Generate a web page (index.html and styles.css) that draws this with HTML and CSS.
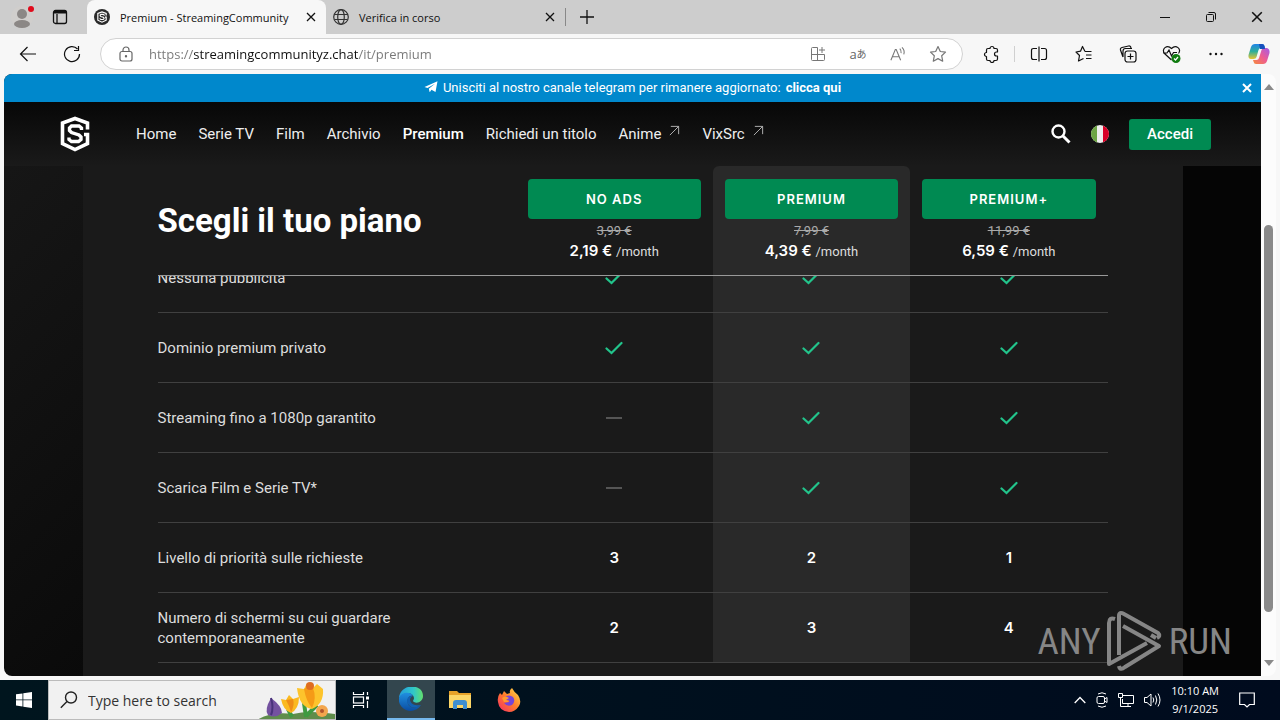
FILE: index.html
```html
<!DOCTYPE html>
<html lang="it">

<head>
    <meta charset="UTF-8">
    <meta name="viewport" content="width=device-width, initial-scale=1.0">
    <title>Premium - StreamingCommunity</title>
    <link rel="stylesheet" href="styles.css">
</head>

<body>
    <svg class="defs" aria-hidden="true">
        <symbol id="check" viewBox="0 0 18 14">
            <path d="M1.5 7.5 6.5 12 16.500 2" fill="none" stroke="#22c48b" stroke-width="2.200" stroke-linecap="round" />
        </symbol>
        <symbol id="close" viewBox="0 0 10 10">
            <path d="M1 1 9 9M9 1 1 9" fill="none" stroke="currentColor" stroke-width="1.300" />
        </symbol>
        <symbol id="external" viewBox="0 0 12 12">
            <path d="M2 1.500H10.500V10M10.500 1.500 1 11" fill="none" stroke="currentColor" />
        </symbol>
        <symbol id="logo" viewBox="0 0 32 36">
            <path d="M28.500 13.500V7L16 2.500 3.500 7V27.500L16 33.500 28.500 27.500V18.500H25" fill="none" stroke="currentColor" stroke-width="3.600" />
            <path d="M22.500 14V12L20 10H12.500L10.500 12V14.500L12.500 16.500 20 19 22 21V23.500L19.500 25.500H12.500L10 23.500V21.500" fill="none" stroke="currentColor" stroke-width="3.400" />
        </symbol>
    </svg>

    <!-- Tabs -->
    <div class="tab-strip">
        <button class="icon-button profile" aria-label="Profile">
            <svg width="24" height="24" viewBox="0 0 24 24">
                <circle cx="12" cy="12" r="11" fill="#d0cecc" />
                <circle cx="12" cy="9" r="5" fill="#8b8785" />
                <ellipse cx="12" cy="19" rx="8" ry="4" fill="#8b8785" />
                <circle cx="21" cy="4" r="3" fill="#e00b1c" />
            </svg>
        </button>
        <button class="icon-button workspaces" aria-label="Tab actions">
            <svg width="16" height="16" viewBox="0 0 16 16" fill="none" stroke="#111" stroke-width="1.300">
                <rect x="1.500" y="1.500" width="13" height="13" rx="2" />
                <path d="M2 3H14" stroke-width="3" />
                <path d="M5 5V14" />
            </svg>
        </button>
        <div class="tab active">
            <svg width="16" height="16" viewBox="0 0 16 16">
                <circle cx="8" cy="8" r="8" fill="#2b2b2b" />
                <g color="#fff"><use href="#logo" x="2" y="2" width="12" height="12" /></g>
            </svg>
            <span class="tab-title">Premium - StreamingCommunity</span>
            <button class="icon-button" aria-label="Close tab"><svg width="10" height="10"><use href="#close" /></svg></button>
        </div>
        <div class="tab">
            <svg width="16" height="16" viewBox="0 0 16 16" fill="none" stroke="#333" stroke-width="1.200">
                <circle cx="8" cy="8" r="7.300" />
                <ellipse cx="8" cy="8" rx="3.300" ry="7.300" />
                <path d="M1.500 5.500H14.500M1.500 10.500H14.500" />
            </svg>
            <span class="tab-title">Verifica in corso</span>
            <button class="icon-button" aria-label="Close tab"><svg width="10" height="10"><use href="#close" /></svg></button>
        </div>
        <button class="icon-button new-tab" aria-label="New tab">
            <svg width="14" height="14" viewBox="0 0 14 14" stroke="#111" stroke-width="1.300"><path d="M7 0V14M0 7H14" /></svg>
        </button>
        <div class="window-buttons">
            <button class="icon-button" aria-label="Minimize"><svg width="10" height="10" viewBox="0 0 10 10" stroke="#111"><path d="M0 5.500H10" /></svg></button>
            <button class="icon-button" aria-label="Restore">
                <svg width="10" height="10" viewBox="0 0 10 10" fill="none" stroke="#111"><rect x=".5" y="2.500" width="7" height="7" rx="1" /><path d="M2.500.5H8Q9.500.5 9.500 2V7.500" /></svg>
            </button>
            <button class="icon-button" aria-label="Close"><svg width="12" height="12"><use href="#close" /></svg></button>
        </div>
    </div>

    <!-- Toolbar -->
    <div class="toolbar">
        <button class="icon-button" aria-label="Back">
            <svg width="18" height="16" viewBox="0 0 18 16" fill="none" stroke="#111" stroke-width="1.200"><path d="M17 8H1.500M8.500 1 1.500 8 8.500 15" /></svg>
        </button>
        <button class="icon-button" aria-label="Refresh">
            <svg width="18" height="18" viewBox="0 0 18 18" fill="none" stroke="#111" stroke-width="1.200"><path d="M16.500 9A7.500 7.500 0 1 1 14.500 4M15.500 1V5.500H11" /></svg>
        </button>
        <div class="address-bar">
            <svg width="14" height="16" viewBox="0 0 14 16" fill="none" stroke="#666" stroke-width="1.200">
                <rect x="1" y="5.500" width="12" height="9.500" rx="2" />
                <path d="M4 5.500V4A3 3 0 0 1 10 4V5.500" />
                <circle cx="7" cy="10.300" r=".6" fill="#666" />
            </svg>
            <input class="address" type="text" aria-label="Address" value="https://streamingcommunityz.chat/it/premium">
            <button class="icon-button" aria-label="Install app">
                <svg width="16" height="16" viewBox="0 0 16 16" fill="none" stroke="#777"><path d="M7.500 1.500H2.500Q1.500 1.500 1.500 2.500V13.500Q1.500 14.500 2.500 14.500H13.500Q14.500 14.500 14.500 13.500V8.500H1.500M7.500 1.500V14.500M12 1V7M9 4H15" /></svg>
            </button>
            <button class="icon-button translate" aria-label="Translate">a<small>あ</small></button>
            <button class="icon-button read-aloud" aria-label="Read aloud">
                <svg width="16" height="16" viewBox="0 0 18 16" fill="none" stroke="#777" stroke-width="1.200"><path d="M1 15 6 3H7L12 15M3 11H10M11 2Q13 4 12.500 7M13.500.5Q17 4 15.500 8.500" /></svg>
            </button>
            <button class="icon-button" aria-label="Add to favorites">
                <svg width="18" height="18" viewBox="0 0 18 18" fill="none" stroke="#777" stroke-width="1.200" stroke-linejoin="round"><path d="M9 1.500 11.300 6.500 16.500 7.100 12.700 10.800 13.700 16.200 9 13.600 4.300 16.200 5.300 10.800 1.500 7.100 6.700 6.500Z" /></svg>
            </button>
        </div>
        <button class="icon-button extensions" aria-label="Extensions">
            <svg width="18" height="18" viewBox="0 0 18 18" fill="none" stroke="#111" stroke-width="1.200"><path d="M5 3.500H7A2 2 0 0 1 11 3.500H13Q14.500 3.500 14.500 5V7H13.500A2 2 0 0 0 13.500 11H14.500V14Q14.500 15.500 13 15.500H11A2 2 0 0 1 7 15.500H5Q3.500 15.500 3.500 14V11.500A2 2 0 0 1 3.500 7.500V5Q3.500 3.500 5 3.500Z" stroke-linejoin="round" /></svg>
        </button>
        <button class="icon-button split" aria-label="Split screen">
            <svg width="18" height="16" viewBox="0 0 18 16" fill="none" stroke="#111" stroke-width="1.200"><path d="M7 2.500H3.500Q1.500 2.500 1.500 4.500V11.500Q1.500 13.500 3.500 13.500H7M11 2.500H14.500Q16.500 2.500 16.500 4.500V11.500Q16.500 13.500 14.500 13.500H11M9 .5V15.500" /></svg>
        </button>
        <button class="icon-button" aria-label="Favorites">
            <svg width="18" height="18" viewBox="0 0 18 18" fill="none" stroke="#111" stroke-width="1.200" stroke-linejoin="round"><path d="M10 6.500H16.500M11 10H16.500M11 13.500H16.500M10 6.500 7.500 1.500 5.500 6.200 1 7 4.500 10.500 3.500 16 8.500 13.500" /></svg>
        </button>
        <button class="icon-button" aria-label="Collections">
            <svg width="18" height="18" viewBox="0 0 18 18" fill="none" stroke="#111" stroke-width="1.200"><rect x="6" y="6" width="11" height="11" rx="2.500" /><path d="M11.500 8.500V14.500M8.500 11.500H14.500M4 12 1.500 5Q1 3 3 2.500L9.500 1Q11.500.5 12 3M4 12V6Q4 3.500 6.500 3.500H13" /></svg>
        </button>
        <button class="icon-button" aria-label="Browser essentials">
            <svg width="20" height="18" viewBox="0 0 20 18" fill="none" stroke="#111" stroke-width="1.200"><path d="M9.500 15 2.500 8.500C-1 4 5-1 9.500 3.500 14-1 20 4 16.500 8.500M1 8H5L7 5 9.500 11 11.500 7.500H15" /><circle cx="14" cy="13.500" r="4.500" fill="#107c10" stroke="none" /><path d="M12 13.500 13.500 15 16 12" stroke="#fff" /></svg>
        </button>
        <button class="icon-button" aria-label="Settings and more">
            <svg width="14" height="4" viewBox="0 0 14 4" fill="#111"><circle cx="1.500" cy="2" r="1.200" /><circle cx="7" cy="2" r="1.200" /><circle cx="12.500" cy="2" r="1.200" /></svg>
        </button>
        <button class="icon-button copilot" aria-label="Copilot">
            <svg width="22" height="22" viewBox="0 0 22 22">
                <defs>
                    <linearGradient id="cool" x1="0" y1="0" x2="0" y2="1"><stop offset="0" stop-color="#2084e8" /><stop offset=".5" stop-color="#2fae9a" /><stop offset="1" stop-color="#e9c532" /></linearGradient>
                    <linearGradient id="warm" x1="1" y1="0" x2="0" y2="1"><stop offset="0" stop-color="#a45be8" /><stop offset=".5" stop-color="#ee5c92" /><stop offset="1" stop-color="#f58b3c" /></linearGradient>
                </defs>
                <path d="M7 1H14Q16 1 16.500 3L17 5H13Q11 5 10.500 7L8.500 14Q8 16 5.500 16H3Q0 16 .5 12L3 4Q4 1 7 1Z" fill="url(#cool)" />
                <path d="M15 21H8Q6 21 5.500 18.500L5 17H8.500Q10.500 17 11 15L13.500 7Q14 5 16.500 5H19Q22 6 21.500 10L19 18Q18 21 15 21Z" fill="url(#warm)" />
                <path d="M14 1Q16 1 16.500 3L17 6H12L11 1Z" fill="#1650bd" />
            </svg>
        </button>
    </div>

    <!-- Page -->
    <div class="viewport">
        <div class="site">
            <div class="telegram-banner">
                <svg width="14" height="12" viewBox="0 0 14 12" fill="#fff"><path d="M.5 6 13.500.3 11.500 11 7.500 8.800 5.700 11.200 4.800 7.700 11 2.700 3.500 7Z" /></svg>
                <span>Unisciti al nostro canale telegram per rimanere aggiornato:</span>
                <a href="#">clicca qui</a>
                <button class="banner-close" aria-label="Chiudi"><svg width="10" height="10" viewBox="0 0 10 10" stroke="#fff" stroke-width="2"><path d="M1 1 9 9M9 1 1 9" /></svg></button>
            </div>

            <header class="site-header">
                <a class="brand" href="#" aria-label="StreamingCommunity"><svg width="32" height="36"><use href="#logo" /></svg></a>
                <nav class="site-nav">
                    <a href="#">Home</a>
                    <a href="#">Serie TV</a>
                    <a href="#">Film</a>
                    <a href="#">Archivio</a>
                    <a class="current" href="#">Premium</a>
                    <a href="#">Richiedi un titolo</a>
                    <a href="#">Anime <svg width="11" height="11"><use href="#external" /></svg></a>
                    <a href="#">VixSrc <svg width="11" height="11"><use href="#external" /></svg></a>
                </nav>
                <div class="site-actions">
                    <button class="icon-button" aria-label="Cerca">
                        <svg width="20" height="20" viewBox="0 0 20 20" fill="none" stroke="#fff" stroke-width="2.400"><circle cx="7.500" cy="7.500" r="6" /><path d="M12 12 18.500 18.500" stroke-width="3" /></svg>
                    </button>
                    <button class="icon-button" aria-label="Italiano">
                        <svg width="18" height="18" viewBox="0 0 18 18">
                            <clipPath id="round"><circle cx="9" cy="9" r="9" /></clipPath>
                            <g clip-path="url(#round)"><path fill="#eee" d="M0 0H18V18H0Z" /><path fill="#6da544" d="M0 0H6V18H0Z" /><path fill="#d80027" d="M12 0H18V18H12Z" /></g>
                        </svg>
                    </button>
                    <a class="login" href="#">Accedi</a>
                </div>
            </header>

            <main class="panel">
                <table class="plans">
                    <thead>
                        <tr>
                            <th class="feature"><h1>Scegli il tuo piano</h1></th>
                            <th>
                                <button class="plan-button">NO ADS</button>
                                <del>3,99 €</del>
                                <p class="price">2,19 € <small>/month</small></p>
                            </th>
                            <th class="highlight">
                                <button class="plan-button">PREMIUM</button>
                                <del>7,99 €</del>
                                <p class="price">4,39 € <small>/month</small></p>
                            </th>
                            <th>
                                <button class="plan-button">PREMIUM+</button>
                                <del>11,99 €</del>
                                <p class="price">6,59 € <small>/month</small></p>
                            </th>
                        </tr>
                    </thead>
                    <tbody>
                        <!-- partly scrolled under the plan header -->
                        <tr class="scrolled">
                            <td><div class="clip"><div>Nessuna pubblicità</div></div></td>
                            <td><div class="clip"><div><svg class="check"><use href="#check" /></svg></div></div></td>
                            <td class="highlight"><div class="clip"><div><svg class="check"><use href="#check" /></svg></div></div></td>
                            <td><div class="clip"><div><svg class="check"><use href="#check" /></svg></div></div></td>
                        </tr>
                        <tr>
                            <td>Dominio premium privato</td>
                            <td><svg class="check"><use href="#check" /></svg></td>
                            <td class="highlight"><svg class="check"><use href="#check" /></svg></td>
                            <td><svg class="check"><use href="#check" /></svg></td>
                        </tr>
                        <tr>
                            <td>Streaming fino a 1080p garantito</td>
                            <td><span class="dash"></span></td>
                            <td class="highlight"><svg class="check"><use href="#check" /></svg></td>
                            <td><svg class="check"><use href="#check" /></svg></td>
                        </tr>
                        <tr>
                            <td>Scarica Film e Serie TV*</td>
                            <td><span class="dash"></span></td>
                            <td class="highlight"><svg class="check"><use href="#check" /></svg></td>
                            <td><svg class="check"><use href="#check" /></svg></td>
                        </tr>
                        <tr>
                            <td>Livello di priorità sulle richieste</td>
                            <td>3</td>
                            <td class="highlight">2</td>
                            <td>1</td>
                        </tr>
                        <tr>
                            <td>Numero di schermi su cui guardare contemporaneamente</td>
                            <td>2</td>
                            <td class="highlight">3</td>
                            <td>4</td>
                        </tr>
                    </tbody>
                </table>
            </main>
        </div>
        <div class="scrollbar">
            <svg width="10" height="6" viewBox="0 0 10 6" fill="#8a8a8a"><path d="M0 6 5 0 10 6Z" /></svg>
            <div class="thumb"></div>
            <svg width="10" height="6" viewBox="0 0 10 6" fill="#8a8a8a"><path d="M0 0 5 6 10 0Z" /></svg>
        </div>
    </div>

    <div class="watermark">
        <span>ANY</span>
        <svg width="56" height="62" viewBox="0 0 56 62" fill="none" stroke="#868686" stroke-width="4" stroke-linejoin="round">
            <path d="M8 9Q2 7 2 13V54L40 33" />
            <path d="M12 45V6Q12 1 17 4L51 23Q54 26 50 28" />
            <path d="M16 16 52 36 18 57Q13 61 12 56" />
            <path d="M49 28 44 25" />
        </svg>
        <span>RUN</span>
    </div>

    <!-- Taskbar -->
    <div class="taskbar">
        <button class="task start" aria-label="Start">
            <svg width="16" height="16" viewBox="0 0 16 16" fill="#fff"><path d="M0 2.300 6.500 1.400V7.500H0ZM7.300 1.300 16 0V7.500H7.300ZM0 8.300H6.500V14.500L0 13.600ZM7.300 8.300H16V16L7.300 14.700Z" /></svg>
        </button>
        <label class="search">
            <svg width="18" height="18" viewBox="0 0 18 18" fill="none" stroke="#222" stroke-width="1.400"><circle cx="11" cy="6.500" r="5.500" /><path d="M7 10.500.8 16.800" /></svg>
            <input type="text" placeholder="Type here to search" aria-label="Search">
            <svg width="78" height="38" viewBox="0 0 78 38">
                <path d="M0 39Q14 30 36 33 52 29 78 33V39Z" fill="#5f8d4b" />
                <path d="M35 36 31 28M49 36 47 22M49 35Q56 28 60 24" stroke="#3f9a41" stroke-width="4" fill="none" />
                <path d="M14 17Q25 25 25 32 18 38 11 34 7 29 14 17Z" fill="#7452a0" />
                <path d="M14 17Q17 27 14 34" fill="none" stroke="#49327b" stroke-width="2" />
                <path d="M24 18 29 19 32 14 36 18 42 16Q42 28 34 32 26 29 24 18Z" fill="#fbb91f" />
                <path d="M29 19Q32 24 34 31 38 24 36 18Z" fill="#ee8d16" />
                <path d="M40 7 47 8 50 2 56 7 60 3 66 8Q67 23 55 28 42 26 40 7Z" fill="#fdc42c" />
                <path d="M47 8Q49 20 55 27 60 17 56 7L52 5Z" fill="#f59b17" />
                <circle cx="53" cy="5" r="4" fill="#df6d20" />
                <circle cx="65" cy="30" r="6" fill="#f3a64e" /><circle cx="65" cy="30" r="2" fill="#b2542c" />
            </svg>
        </label>
        <button class="task task-view" aria-label="Task view">
            <svg width="18" height="18" viewBox="0 0 18 18" fill="none" stroke="#fff" stroke-width="1.200"><path d="M1.500 1V3.500H11.500V1M1.500 17V14.500H11.500V17M15.500 1V4M15.500 10V17" /><rect x="1.500" y="6" width="10" height="6" /><path d="M14 7H17" stroke-width="3" /></svg>
        </button>
        <button class="task running" aria-label="Microsoft Edge">
            <svg width="24" height="24" viewBox="0 0 24 24">
                <defs>
                    <linearGradient id="edge-top"><stop offset="0" stop-color="#249bdc" /><stop offset=".6" stop-color="#30c7c9" /><stop offset="1" stop-color="#62df6d" /></linearGradient>
                    <linearGradient id="edge-low" x1="0" y1="0" x2="0" y2="1"><stop offset="0" stop-color="#208fe0" /><stop offset="1" stop-color="#0b4da2" /></linearGradient>
                </defs>
                <path d="M0 11C1-4 24-4 24 9 24 14 19 17 15 15 13 14 15 13 15 11 14 5 5 4 0 11Z" fill="url(#edge-top)" />
                <path d="M0 11C2 5 12 4 14 9 9 8 8 13 9 17 11 22 18 21 22 18 18 24 12 25 7 23 2 21-1 16 0 11Z" fill="url(#edge-low)" />
                <path d="M14 9C8 8 7 14 9 17 12 22 18 21 22 18 18 19 12 18 11 13 11 11 12 10 14 9Z" fill="#1261b3" />
            </svg>
        </button>
        <button class="task" aria-label="File Explorer">
            <svg width="22" height="20" viewBox="0 0 22 20"><path d="M0 1H8L10 3H22V18H0Z" fill="#e7a229" /><path d="M0 5H22V18H0Z" fill="#fcd667" /><path d="M4 19V13Q4 10 7 10H15Q18 10 18 13V19H14V15H8V19Z" fill="#3f8fd0" /></svg>
        </button>
        <button class="task" aria-label="Firefox">
            <svg width="24" height="24" viewBox="0 0 24 24">
                <defs><linearGradient id="fox" x1="1" y1="0" x2="0" y2="1"><stop offset="0" stop-color="#ffe14a" /><stop offset=".5" stop-color="#ff7b2b" /><stop offset="1" stop-color="#f42a68" /></linearGradient></defs>
                <path d="M3 5 5 7 7 3 10 6 13 5Q12 2 15 0 17 4 21 7 25 13 22 18 18 24 12 24 2 23 1 14 0 9 3 5Z" fill="url(#fox)" />
                <path d="M8 9Q12 6 16 9 19 13 15 17 10 19 7 15L12 14Q13 12 9 12Z" fill="#7545d8" />
                <path d="M5 10Q8 7 12 10L9 12Q12 13 11 14L7 14Z" fill="#ff9a2e" />
            </svg>
        </button>
        <div class="tray">
            <svg width="12" height="8" viewBox="0 0 12 8" fill="none" stroke="#fff" stroke-width="1.300"><path d="M.7 7 6 1.500 11.300 7" /></svg>
            <svg width="12" height="16" viewBox="0 0 12 16" fill="none" stroke="#fff"><rect x="1" y="4.500" width="7.500" height="7" rx="1.500" /><path d="M8.500 7 11 5.500V10.500L8.500 9M2 2Q6-.5 10 2M2 14Q6 16.500 10 14" /></svg>
            <svg width="16" height="14" viewBox="0 0 16 14" fill="none" stroke="#fff"><path d="M5 2.500H15.500V10.500H4.500V6M10 10.500V13.500M5 13.500H13M.5.500H4.500V4.500H.5ZM2.500 4.500V13.500H5" /></svg>
            <svg width="17" height="14" viewBox="0 0 17 14" fill="none" stroke="#fff"><path d="M.5 4.500H3L7 1V13L3 9.500H.5ZM9 4.500Q10.500 7 9 9.500M11.500 2.500Q14 7 11.500 11.500M14 .5Q18 7 14 13.500" /></svg>
            <div class="clock"><time>10:10 AM</time><time>9/1/2025</time></div>
            <svg class="notifications" width="16" height="16" viewBox="0 0 16 16" fill="none" stroke="#fff" stroke-width="1.200"><path d="M.7 1H15.300V12.500H10.500L8 15 5.500 12.500H.7Z" /></svg>
        </div>
    </div>
</body>

</html>
```
FILE: styles.css
```css
* {
    box-sizing: border-box;
}

body {
    margin: 0;
    height: 100vh;
    display: flex;
    flex-direction: column;
    overflow: hidden;
    background-color: #f7f7f7;
    color: #111;
    font-family: "Open Sans", "Noto Sans", sans-serif;
    font-size: 11px;
}

button,
input {
    font-family: inherit;
    font-size: inherit;
}

svg {
    display: block;
    flex-shrink: 0;
}

.defs {
    position: absolute;
    width: 0;
    height: 0;
}

.icon-button {
    display: flex;
    align-items: center;
    justify-content: center;
    flex-shrink: 0;
    padding: 0;
    border: none;
    background: none;
    color: #111;
    cursor: pointer;
}

/* tabs */
.tab-strip {
    display: flex;
    flex-shrink: 0;
    height: 34px;
    background-color: #cdcdcd;
}

.profile {
    width: 44px;
}

.workspaces {
    width: 32px;
    margin-right: 11px;
}

.tab {
    display: flex;
    align-items: center;
    gap: 10px;
    width: 239px;
    padding: 0 10px 0 7px;
}

.tab.active {
    background-color: #f7f7f7;
    border-radius: 8px 8px 0 0;
}

.tab-title {
    flex: 1;
    white-space: nowrap;
}

.new-tab {
    width: 44px;
    position: relative;
}

.new-tab::before {
    content: "";
    position: absolute;
    left: 0;
    top: 8px;
    height: 18px;
    border-left: 1px solid #888;
}

.window-buttons {
    display: flex;
    margin-left: auto;
}

.window-buttons .icon-button {
    width: 46px;
}

/* toolbar */
.toolbar {
    display: flex;
    align-items: center;
    flex-shrink: 0;
    height: 40px;
    padding-left: 6px;
}

.toolbar > .icon-button {
    width: 44px;
    height: 32px;
}

.address-bar {
    display: flex;
    align-items: center;
    flex: 1;
    height: 32px;
    margin-left: 6px;
    padding: 0 4px 0 18px;
    border: 1px solid #d2d2d2;
    border-radius: 16px;
    background-color: white;
}

/* the host stands out from the rest of the url */
.address {
    flex: 1;
    min-width: 0;
    margin-left: 16px;
    padding: 0;
    border: none;
    outline: none;
    font-size: 13px;
    color: transparent;
    background: linear-gradient(90deg, #777 45px, #111 45px, #111 209px, #777 209px);
    background-clip: text;
    -webkit-background-clip: text;
}

.address-bar .icon-button {
    width: 40px;
    color: #666;
}

.translate {
    font-family: "Open Sans", "Noto Sans CJK JP", sans-serif;
    font-size: 13px;
    line-height: 16px;
}

.translate small {
    font-size: 10px;
}

.toolbar > .extensions {
    margin-left: 7px;
}

.toolbar > .split {
    width: 48px;
    border-left: 1px solid #d0d0d0;
    height: 16px;
}

.toolbar > .copilot {
    width: 42px;
}

/* page */
.viewport {
    display: flex;
    flex: 1;
    min-height: 0;
    margin: 0 4px 4px;
    border-radius: 8px;
    overflow: hidden;
    background-color: #fcfcfc;
}

.site {
    display: flex;
    flex-direction: column;
    flex: 1;
    background: linear-gradient(135deg, #181818 0%, #050505 50%, #050505 100%);
    color: white;
    font-family: Roboto, sans-serif;
    font-size: 15px;
}

.site a {
    color: inherit;
    text-decoration: none;
}

.telegram-banner {
    display: flex;
    align-items: center;
    justify-content: center;
    gap: 5px;
    flex-shrink: 0;
    height: 28px;
    padding-bottom: 2px;
    background-color: #0088cc;
    font-size: 13px;
    position: relative;
}

.telegram-banner a {
    font-weight: bold;
}

.banner-close {
    position: absolute;
    right: 9px;
    top: 9px;
    padding: 0;
    border: none;
    background: none;
    cursor: pointer;
}

.site-header {
    display: flex;
    align-items: center;
    flex-shrink: 0;
    height: 64px;
    padding: 0 50px 0 55px;
    background: linear-gradient(#070707, #1a1a1a);
}

.site-nav {
    display: flex;
    gap: 22px;
    margin-left: 45px;
    color: #eee;
}

.site-nav a {
    display: flex;
    gap: 8px;
    white-space: nowrap;
}

.site-nav .current {
    color: white;
    font-weight: 500;
}

.site-nav svg {
    color: #bbb;
}

.site-actions {
    display: flex;
    align-items: center;
    gap: 20px;
    margin-left: auto;
}

.login {
    padding: 6px 18px;
    border-radius: 3px;
    background-color: #008a52;
    font-weight: 500;
    line-height: 19px;
}

.panel {
    width: 100%;
    max-width: 1100px;
    flex: 1;
    margin: 0 auto;
    padding: 0 75px;
    background-color: #1a1a1a;
}

/* plans */
.plans {
    width: 100%;
    table-layout: fixed;
    border-collapse: separate;
    border-spacing: 0;
}

.plans th {
    height: 110px;
    padding: 13px 12px 0;
    border-bottom: 1px solid #999;
    vertical-align: top;
    font-weight: normal;
}

.plans .feature {
    width: 358px;
    padding: 0;
    text-align: left;
    vertical-align: middle;
}

h1 {
    margin: 0;
    font-size: 33px;
    line-height: 40px;
}

.highlight {
    background-color: #292929;
}

th.highlight {
    border-radius: 6px 6px 0 0;
}

.plan-button {
    display: block;
    width: 100%;
    height: 40px;
    border: none;
    border-radius: 4px;
    background-color: #008a52;
    color: white;
    font-family: Inter, sans-serif;
    font-size: 13px;
    font-weight: 600;
    letter-spacing: 1px;
    cursor: pointer;
}

.plans del {
    display: block;
    margin-top: 3px;
    color: #aaa;
    font-size: 13px;
    line-height: 18px;
}

.price {
    margin: 0;
    font-family: Inter, sans-serif;
    font-size: 15px;
    font-weight: 600;
    line-height: 22px;
}

.price small {
    color: #ddd;
    font-family: Roboto, sans-serif;
    font-size: 13px;
    font-weight: normal;
}

.plans td {
    height: 70px;
    padding: 0;
    border-bottom: 1px solid #404040;
    text-align: center;
    font-family: Inter, sans-serif;
    font-weight: 600;
    line-height: 20px;
}

.plans td:first-child {
    padding-right: 100px;
    color: #ddd;
    text-align: left;
    font-family: Roboto, sans-serif;
    font-weight: normal;
}

.plans .scrolled td {
    height: 37px;
}

.clip {
    display: flex;
    align-items: flex-end;
    height: 36px;
    overflow: hidden;
}

.clip div {
    display: flex;
    align-items: center;
    flex: 1;
    height: 69px;
}

.check {
    width: 18px;
    height: 14px;
    margin: 0 auto;
}

.dash {
    display: block;
    width: 16px;
    height: 2px;
    margin: 0 auto;
    background-color: #555;
}

.scrollbar {
    display: flex;
    flex-direction: column;
    align-items: center;
    width: 15px;
    padding: 10px 0;
}

.thumb {
    width: 9px;
    height: 387px;
    margin: 135px 0 auto;
    border-radius: 5px;
    background-color: #8a8a8a;
}

.watermark {
    position: absolute;
    right: 48px;
    bottom: 48px;
    display: flex;
    align-items: center;
    gap: 6px;
    color: #868686;
    font-family: "Roboto Condensed", "Liberation Sans Narrow", "Liberation Sans", sans-serif;
    font-size: 37px;
    pointer-events: none;
}

/* taskbar */
.taskbar {
    display: flex;
    flex-shrink: 0;
    height: 40px;
    background: linear-gradient(90deg, #00151e, #000b1e);
    color: white;
}

.task {
    display: flex;
    align-items: center;
    justify-content: center;
    width: 49px;
    padding: 0;
    border: none;
    background: none;
}

.task.start,
.task.running {
    width: 48px;
}

.task-view {
    width: 51px;
    padding-right: 2px;
}

.task.running {
    background-color: #33464e;
    border-bottom: 2px solid #76b9ed;
}

.search {
    display: flex;
    align-items: center;
    width: 288px;
    padding-left: 11px;
    border: 1px solid #bbb;
    background-color: #f1f1f1;
}

.search input {
    flex: 1;
    min-width: 0;
    margin-left: 10px;
    padding: 0;
    border: none;
    outline: none;
    background: none;
    font-size: 14px;
}

.search input::placeholder {
    color: #333;
}

.tray {
    display: flex;
    align-items: center;
    gap: 10px;
    margin-left: auto;
    padding-right: 25px;
}

.clock {
    display: flex;
    flex-direction: column;
    align-items: center;
    line-height: 18px;
}

.notifications {
    margin-left: 10px;
}
```
